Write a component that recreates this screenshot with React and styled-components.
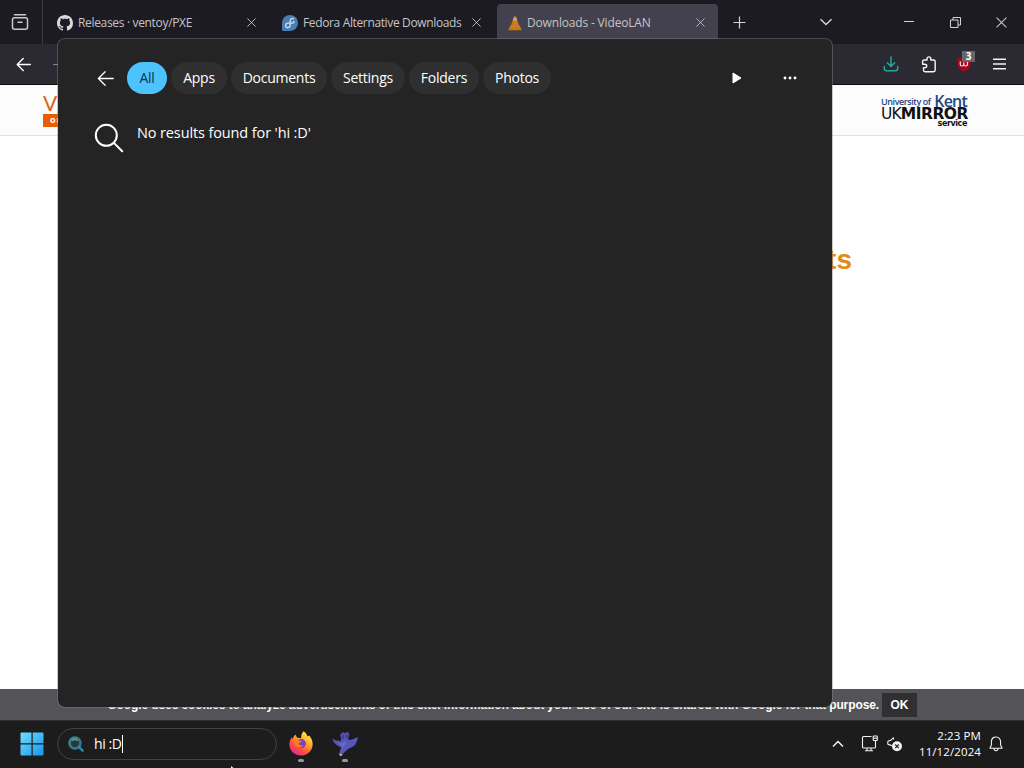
import styled, { createGlobalStyle } from 'styled-components';

const filters = [
  { label: 'All', width: 40, active: true },
  { label: 'Apps', width: 56 },
  { label: 'Documents', width: 96 },
  { label: 'Settings', width: 74 },
  { label: 'Folders', width: 70 },
  { label: 'Photos', width: 68 },
];

const CloseIcon = ({ size = 9 }) => (
  <svg width={size} height={size} viewBox="0 0 10 10" stroke="currentColor" fill="none">
    <path d="M.5.5l9 9M9.5.5l-9 9" />
  </svg>
);

const ArchiveIcon = () => (
  <svg width="18" height="18" viewBox="0 0 18 18" fill="none" stroke="#c9c9d1" strokeWidth="1.5">
    <path d="M3.5 1.8h11" strokeLinecap="round" />
    <rect x="1.5" y="4.8" width="15" height="11.5" rx="2" />
    <path d="M7 9.2h4" strokeLinecap="round" />
  </svg>
);

const GithubIcon = () => (
  <svg width="16" height="16" viewBox="0 0 16 16" fill="#d8d8dc">
    <path d="M8 0C3.58 0 0 3.58 0 8c0 3.54 2.29 6.53 5.47 7.59.4.07.55-.17.55-.38 0-.19-.01-.82-.01-1.49-2.01.37-2.53-.49-2.69-.94-.09-.23-.48-.94-.82-1.13-.28-.15-.68-.52-.01-.53.63-.01 1.08.58 1.23.82.72 1.21 1.87.87 2.33.66.07-.52.28-.87.51-1.07-1.78-.2-3.64-.89-3.64-3.95 0-.87.31-1.59.82-2.15-.08-.2-.36-1.02.08-2.12 0 0 .67-.21 2.2.82.64-.18 1.32-.27 2-.27s1.36.09 2 .27c1.53-1.04 2.2-.82 2.2-.82.44 1.1.16 1.92.08 2.12.51.56.82 1.27.82 2.15 0 3.07-1.87 3.75-3.65 3.95.29.25.54.73.54 1.48 0 1.07-.01 1.93-.01 2.2 0 .21.15.46.55.38A8 8 0 0 0 16 8c0-4.42-3.58-8-8-8z" />
  </svg>
);

const FedoraIcon = () => (
  <svg width="16" height="16" viewBox="0 0 16 16">
    <path d="M8 0a8 8 0 0 1 0 16H1.5A1.5 1.5 0 0 1 0 14.5V8a8 8 0 0 1 8-8z" fill="#4b7fb2" />
    <path
      d="M12 4.2C10.6 2.7 8.2 3.4 8.2 5.7v4.5c0 1.5-1 2.4-2.2 2.4s-2.300-.9-2.300-2.200 1-2.200 2.300-2.200h3.700c1.300 0 2.300-.8 2.300-2.200"
      fill="none"
      stroke="#cddded"
      strokeWidth="1.3"
    />
  </svg>
);

const ConeIcon = () => (
  <svg width="14" height="16" viewBox="0 0 14 16">
    <path d="M2.2 10.5h9.6l2 4.7H.2z" fill="#c8780f" />
    <path d="M6 1.2h2l3.3 10.6c-2 1.3-6.6 1.3-8.6 0z" fill="#d67a14" />
    <path d="M5.5 3h3l.7 2.4H4.8z" fill="#b9aaa3" />
    <path d="M3.9 8h6.200l.5 1.600H3.400z" fill="#99826f" />
  </svg>
);

const ArrowIcon = ({ size, weight = 1.5 }) => (
  <svg width={size} height={size} viewBox="0 0 16 16" fill="none" stroke="#fff" strokeWidth={weight}>
    <path d="M1.3 8h14M7.7 1.6L1.3 8l6.4 6.4" strokeLinecap="round" strokeLinejoin="round" />
  </svg>
);

const DownloadIcon = () => (
  <svg width="16" height="16" viewBox="0 0 16 16" fill="none" stroke="#25a59e" strokeWidth="1.5">
    <path d="M8 .8v9.400M4.300 6.700L8 10.400l3.700-3.700M1.300 10.500v2c0 1.500.7 2.200 2.200 2.200h9c1.500 0 2.200-.7 2.200-2.200v-2" strokeLinecap="round" />
  </svg>
);

const PuzzleIcon = () => (
  <svg width="16" height="17" viewBox="0 0 16 17" fill="none" stroke="#f5f5f8" strokeWidth="1.4">
    <path
      d="M6 4V3c0-1.300.8-2.100 1.900-2.100S9.800 1.700 9.800 3v1h2.700c1.200 0 1.700.6 1.700 1.700v8.400c0 1.100-.6 1.700-1.700 1.700H4.200c-1.200 0-1.700-.6-1.700-1.700v-2.500h1.200c1.300 0 2-.7 2-1.700s-.7-1.700-2-1.700H1.600V5.700C1.600 4.600 2.200 4 3.300 4z"
      strokeLinejoin="round"
    />
  </svg>
);

const ShieldIcon = () => (
  <svg width="14" height="16" viewBox="0 0 14 16">
    <path d="M7 0c2 1.500 4.300 2 6.700 2v6c0 4-3.200 6.300-6.700 8C3.500 14.300.3 12 .3 8V2C2.700 2 5 1.500 7 0z" fill="#a5061d" />
    <path d="M3.300 5.500v3c0 2 3.500 2 3.500 0v-2 2c0 2 3.700 2 3.700 0v-3" fill="none" stroke="#eee" strokeWidth="1.2" />
  </svg>
);

const SearchIcon = () => (
  <svg width="30" height="30" viewBox="0 0 30 30" fill="none" stroke="#fff" strokeWidth="2">
    <circle cx="12.3" cy="12.3" r="10.5" />
    <path d="M19.9 19.9l8.3 8.3" strokeLinecap="round" />
  </svg>
);

const WindowsIcon = () => (
  <svg width="24" height="24" viewBox="0 0 24 24">
    <defs>
      <linearGradient id="win" x1="0" y1="0" x2="1" y2="1">
        <stop offset="0" stopColor="#72dcfa" />
        <stop offset="1" stopColor="#1597ef" />
      </linearGradient>
    </defs>
    <path d="M1.500.5h10v10.700H.5V1.500a1 1 0 0 1 1-1zM12.700.5h9.800a1 1 0 0 1 1 1v9.700H12.700zM.5 12.500h11v11h-10a1 1 0 0 1-1-1zM12.700 12.500h10.800v10a1 1 0 0 1-1 1h-9.800z" fill="url(#win)" />
  </svg>
);

const TaskSearchIcon = () => (
  <svg width="16" height="16" viewBox="0 0 16 16" fill="none">
    <defs>
      <linearGradient id="lens" x1="0" y1="0" x2="1" y2="1">
        <stop offset="0" stopColor="#2499b5" />
        <stop offset=".45" stopColor="#40777b" />
        <stop offset="1" stopColor="#2378b8" />
      </linearGradient>
    </defs>
    <circle cx="7" cy="7" r="5.5" fill="#263940" stroke="url(#lens)" strokeWidth="2.5" />
    <path d="M4 4.500a5 5 0 0 1 6 0" stroke="#7b927a" strokeWidth="1.5" />
    <path d="M11 11l3.600 3.600" stroke="#238fc0" strokeWidth="2.3" strokeLinecap="round" />
  </svg>
);

const FirefoxIcon = () => (
  <svg width="24" height="25" viewBox="0 0 24 25">
    <defs>
      <linearGradient id="fox" x1=".85" y1=".05" x2=".25" y2="1">
        <stop offset="0" stopColor="#fff34a" />
        <stop offset=".35" stopColor="#ffad2d" />
        <stop offset=".65" stopColor="#ff5939" />
        <stop offset="1" stopColor="#e3208f" />
      </linearGradient>
    </defs>
    <path d="M14.500.3c2 1.200 3.500 3 3.800 5 1-.1 1.600-.4 2-.7 2.300 3 3.600 6 3.300 9.300C23.200 20 18.200 24.500 12 24.500S.4 20 .4 13.500C.4 10.500 1.500 8 3 6.300l.5 2C4.500 6 5.300 4.600 6.600 3.600c.1 1.300.8 2.400 2 3.200l3.500.4C12 4.500 12.800 2 14.500.3z" fill="url(#fox)" />
    <circle cx="12.4" cy="12.6" r="4.5" fill="#7944b8" />
    <path d="M4.500 9.300c2-1.800 4.700-1.400 6 .4l2.500.4c-.5 1.300-2.400 1.200-3.400 2.300.4 1.700 2.600 2.500 4.500 1.700-.7 2.900-5.500 3.400-7.400.5-.9-1.500-1.700-3.500-2.200-5.300z" fill="#ff7c2b" />
  </svg>
);

const BirdIcon = () => (
  <svg width="26" height="26" viewBox="0 0 26 26">
    <path d="M.5 7.600c2.600 2 5.200 2.200 8.200 2.600l.6-2.700c-.9-1.500-1.300-3-.7-4.500L11.200 1.300l1.800.9 2-1.200c2 .3 2.700 2.200 1.900 4.100l-.8 1.600.7 2.200c3.600 0 6.100-1.500 9-3-.5 5.900-3.500 10.200-8.200 11.100l-4.200 3.200-4 4.200-2.700-1 2.700-6.800C5 14.800 1.300 12.300.5 7.600z" fill="#5856b9" />
    <path d="M10.800 2.500l1.700 3.300L11 9l-1.500-3zM15.500 2l.4 4-2 2.300-.4-4z" fill="#413d9d" />
    <path d="M4.500 11.300c3.500 1.700 6.500.7 10-1.600-1 4-3 7-6 9l2-3.500z" fill="#6a68c7" />
    <path d="M7.900 22.500l2.800 1-1.600 1.700-1.800-1z" fill="#a4b6a7" />
  </svg>
);

const MonitorIcon = () => (
  <svg width="17" height="17" viewBox="0 0 17 17" fill="none" stroke="#f2f2f2" strokeWidth="1.1">
    <path d="M10.500 1.500h-8c-.7 0-1 .3-1 1v9.500c0 .7.3 1 1 1h11c.7 0 1-.3 1-1V6M4 15.800h8M6 13v2.800M10 13v2.800" />
    <rect x="12.2" y="1" width="4.1" height="4.5" rx=".5" />
    <path d="M12.200 3.200h4" />
  </svg>
);

const VolumeIcon = () => (
  <svg width="16" height="16" viewBox="0 0 16 16">
    <path d="M6.500 1.500v2M6.500 1.600L3.800 4.300 1.500 5C.8 5.300.8 5.500.8 6v1.700c0 .6.2.8.8.9l2.200.5 1 1" fill="none" stroke="#f2f2f2" strokeWidth="1.1" />
    <circle cx="10" cy="10.300" r="5" fill="#f2f2f2" />
    <path d="M8.200 8.500l3.600 3.600M11.800 8.500l-3.600 3.600" stroke="#1c1c1c" strokeWidth="1.1" />
  </svg>
);

const BellIcon = () => (
  <svg width="14" height="16" viewBox="0 0 14 16" fill="none" stroke="#f2f2f2" strokeWidth="1.1">
    <path d="M7 1C4.300 1 2.400 3 2.400 5.700v3.200L.9 12.200h12.200l-1.500-3.300V5.700C11.600 3 9.700 1 7 1zM5 12.500c.2 2.900 3.800 2.900 4 0" strokeLinejoin="round" />
  </svg>
);

const App = () => (
  <Desktop>
    <GlobalStyle />
    <TabStrip>
      <RecentButton>
        <ArchiveIcon />
      </RecentButton>
      <Tab $width={225}>
        <GithubIcon />
        <TabTitle $tracking={-0.33}>Releases · ventoy/PXE</TabTitle>
        <CloseIcon />
      </Tab>
      <Tab $width={225}>
        <FedoraIcon />
        <TabTitle $tracking={-0.36}>Fedora Alternative Downloads</TabTitle>
        <CloseIcon />
      </Tab>
      <Tab $width={221} $active>
        <ConeIcon />
        <TabTitle $tracking={-0.17}>Downloads - VideoLAN</TabTitle>
        <CloseIcon />
      </Tab>
      <NewTab>
        <svg width="13" height="13" viewBox="0 0 13 13" stroke="#d3d3d7" strokeWidth="1.2">
          <path d="M6.500.5v12M.5 6.500h12" />
        </svg>
      </NewTab>
      <WindowControls>
        <svg width="14" height="8" viewBox="0 0 14 8" fill="none" stroke="#d3d3d7" strokeWidth="1.5">
          <path d="M1.500 1.200L7 6.500l5.500-5.300" />
        </svg>
        <svg width="10" height="10" viewBox="0 0 10 10" stroke="#d3d3d7">
          <path d="M0 4.500h10" />
        </svg>
        <svg width="11" height="11" viewBox="0 0 11 11" stroke="#d3d3d7" fill="none">
          <path d="M.5 3h7.500v7.500H.5zM3 3V.5h7.500V8H8" />
        </svg>
        <CloseIcon size={11} />
      </WindowControls>
    </TabStrip>
    <Toolbar>
      <ArrowIcon size={15} />
      <ForwardIcon />
      <ToolbarActions>
        <DownloadIcon />
        <PuzzleIcon />
        <Extension>
          <ShieldIcon />
          <Badge>3</Badge>
        </Extension>
        <svg width="13" height="12" viewBox="0 0 13 12" stroke="#f2f2f5" strokeWidth="1.4">
          <path d="M0 1.200h13M0 6h13M0 10.800h13" />
        </svg>
      </ToolbarActions>
    </Toolbar>
    <PageHeader>
      <SiteLogo>
        <span>VideoLAN</span>
        <strong>organization</strong>
      </SiteLogo>
      <Sponsor>
        <SponsorLine>
          <span>University of</span>
          <b>Kent</b>
        </SponsorLine>
        <SponsorName>
          UK<b>MIRROR</b>
        </SponsorName>
        <SponsorService>service</SponsorService>
      </Sponsor>
    </PageHeader>
    <PageBody>
      <Heading>VLC downloads and mirror hosts</Heading>
    </PageBody>
    <CookieBar>
      <CookieText>
        Google uses cookies to analyze advertisements of this site. Information about your use of our site is shared with Google for that purpose.
      </CookieText>
      <OkButton>OK</OkButton>
    </CookieBar>
    <Taskbar>
      <WindowsIcon />
      <SearchBox>
        <TaskSearchIcon />
        <span>hi :D</span>
        <Caret />
      </SearchBox>
      <TaskApp>
        <FirefoxIcon />
      </TaskApp>
      <TaskApp>
        <BirdIcon />
      </TaskApp>
      <Tray>
        <svg width="12" height="8" viewBox="0 0 12 8" fill="none" stroke="#f2f2f2" strokeWidth="1.5">
          <path d="M1 6.500L6 1.500l5 5" />
        </svg>
        <MonitorIcon />
        <VolumeIcon />
        <Clock>
          <span>2:23 PM</span>
          <span>11/12/2024</span>
        </Clock>
        <BellIcon />
      </Tray>
    </Taskbar>
    <SearchPanel>
      <FilterRow>
        <ArrowIcon size={17} weight={1.2} />
        <Filters>
          {filters.map(({ label, width, active }) => (
            <Filter key={label} $width={width} $active={active}>
              {label}
            </Filter>
          ))}
        </Filters>
        <PanelActions>
          <svg width="10" height="12" viewBox="0 0 10 12" fill="#fff" stroke="#fff" strokeLinejoin="round">
            <path d="M1 1l8 5-8 5z" />
          </svg>
          <svg width="14" height="4" viewBox="0 0 14 4" fill="#fff">
            <circle cx="2" cy="2" r="1.45" />
            <circle cx="7" cy="2" r="1.45" />
            <circle cx="12" cy="2" r="1.45" />
          </svg>
        </PanelActions>
      </FilterRow>
      <EmptyResult>
        <SearchIcon />
        <p>No results found for 'hi :D'</p>
      </EmptyResult>
    </SearchPanel>
    <PointerHint viewBox="0 0 3 2">
      <path d="M0 0l2.500 2H0z" fill="#eee" />
    </PointerHint>
  </Desktop>
);

export default App;

const GlobalStyle = createGlobalStyle`
  * {
    box-sizing: border-box;
  }

  body {
    margin: 0;
    overflow: hidden;
    background: #1c1c1c;
  }

  svg {
    display: block;
    flex-shrink: 0;
  }
`;

const Desktop = styled.div`
  position: relative;
  display: flex;
  flex-direction: column;
  width: 1024px;
  height: 768px;
  overflow: hidden;
  font-family: 'Open Sans', 'Noto Sans', sans-serif;
  color: #fff;
`;

const TabStrip = styled.div`
  display: flex;
  height: 44px;
  background: #1c1b22;
  color: #c4c4c9;
`;

const RecentButton = styled.div`
  display: flex;
  align-items: center;
  width: 43px;
  padding-left: 11px;
  border-right: 1px solid #3c3b43;
`;

const Tab = styled.div`
  display: flex;
  align-items: center;
  width: ${({ $width }) => $width}px;
  height: 37px;
  margin-top: 4px;
  margin-left: ${({ $active }) => ($active ? '4px' : '0')};
  padding: 0 ${({ $active }) => ($active ? '13px 0 11px' : '12px 0 14px')};
  border-radius: 4px;
  background: ${({ $active }) => ($active ? '#42414d' : 'transparent')};
`;

const TabTitle = styled.span`
  flex: 1;
  margin-left: 5px;
  font-size: 12px;
  letter-spacing: ${({ $tracking = 0 }) => $tracking}px;
  white-space: nowrap;
`;

const NewTab = styled.div`
  padding: 16px 0 0 15px;
`;

const WindowControls = styled.div`
  display: grid;
  grid-template-columns: 84px 46px 46px 46px;
  align-items: center;
  justify-items: center;
  margin-left: auto;

  svg:first-child {
    margin-right: 36px;
  }
`;

const Toolbar = styled.div`
  display: flex;
  align-items: center;
  height: 41px;
  padding: 0 18px 0 16px;
  border-bottom: 1px solid #0c0c0d;
  background: #2b2a33;
`;

const ForwardIcon = styled.span`
  width: 12px;
  height: 1px;
  margin-left: 22px;
  background: #85848b;
`;

const ToolbarActions = styled.div`
  display: flex;
  align-items: center;
  gap: 22px;
  margin-left: auto;
`;

const Extension = styled.div`
  position: relative;
  margin-left: -2px;
`;

const Badge = styled.span`
  position: absolute;
  top: -5px;
  left: 5px;
  width: 13px;
  height: 11px;
  background: #66666b;
  font: bold 10px/11px 'Open Sans', sans-serif;
  text-align: center;
`;

const PageHeader = styled.header`
  display: flex;
  align-items: flex-start;
  justify-content: space-between;
  height: 51px;
  padding: 7px 57px 0 43px;
  border-bottom: 1px solid #e2e2e2;
  background: #fcfcfc;
`;

const SiteLogo = styled.div`
  display: flex;
  flex-direction: column;
  width: 100px;

  span {
    height: 22px;
    color: #dc631b;
    font: 400 21px/21px Lato, sans-serif;
  }

  strong {
    height: 13px;
    padding-left: 7px;
    background: #e85e00;
    font: bold 9px/12px 'Open Sans', sans-serif;
    letter-spacing: 1px;
  }
`;

const Sponsor = styled.div`
  display: flex;
  flex-direction: column;
  width: 86px;
  padding-top: 4px;
  color: #111;
  white-space: nowrap;
`;

const SponsorLine = styled.div`
  display: flex;
  justify-content: space-between;
  align-items: flex-end;
  height: 12px;
  color: #27457f;
  font: 600 9px/12px 'Open Sans', sans-serif;
  letter-spacing: -0.42px;

  b {
    font-size: 16px;
    font-weight: 600;
    line-height: 13px;
    letter-spacing: -0.8px;
  }
`;

const SponsorName = styled.span`
  height: 12px;
  font: 15.5px/13px 'DejaVu Sans', sans-serif;
  letter-spacing: -0.85px;

  b {
    letter-spacing: -0.5px;
  }
`;

const SponsorService = styled.span`
  font: bold 8px/8px 'DejaVu Sans', sans-serif;
  letter-spacing: -0.4px;
  text-align: right;
`;

const PageBody = styled.main`
  flex: 1;
  padding-top: 107px;
  background: #fff;
`;

const Heading = styled.h1`
  width: 852px;
  margin: 0;
  color: #e58a13;
  font: bold 28px/34px 'Liberation Sans', sans-serif;
  text-align: right;
`;

const CookieBar = styled.div`
  display: flex;
  align-items: center;
  height: 31px;
  padding-right: 107px;
  background: #545458;
  font: bold 12px/14px 'Liberation Sans', Arial, sans-serif;
`;

const CookieText = styled.span`
  width: 879px;
  margin-right: 3px;
  flex-shrink: 0;
  text-align: right;
  white-space: nowrap;
  letter-spacing: -0.105px;
`;

const OkButton = styled.div`
  flex: none;
  width: 35px;
  padding: 5px 0;
  background: #303030;
  text-align: center;
`;

const Taskbar = styled.footer`
  display: flex;
  align-items: center;
  height: 48px;
  padding: 0 21px 2px 20px;
  border-top: 1px solid #303030;
  background: #1c1c1c;
`;

const SearchBox = styled.div`
  display: flex;
  align-items: center;
  width: 220px;
  height: 32px;
  margin-left: 13px;
  padding-left: 10px;
  border: 1px solid #424242;
  border-radius: 16px;
  background: #1d1d1d;
  font-size: 14px;

  span {
    margin-left: 10px;
    letter-spacing: -0.4px;
    white-space: nowrap;
  }
`;

const Caret = styled.i`
  width: 1px;
  height: 18px;
  background: #fff;
`;

const TaskApp = styled.div`
  display: flex;
  flex-direction: column;
  align-items: center;
  width: 44px;
  height: 37px;
  padding-top: 6px;
  transform: translateX(2px);

  &::after {
    content: '';
    width: 6px;
    height: 3px;
    margin-top: auto;
    flex: none;
    border-radius: 2px;
    background: #969a9d;
  }
`;

const Tray = styled.div`
  display: flex;
  align-items: center;
  margin-left: auto;

  svg:nth-child(2) {
    margin-left: 17px;
  }

  svg:nth-child(3) {
    margin-left: 9px;
  }
`;

const Clock = styled.div`
  display: flex;
  flex-direction: column;
  align-items: flex-end;
  width: 78px;
  margin-right: 8px;
  font-size: 11.5px;
  line-height: 16px;
  letter-spacing: 0.1px;
`;

const SearchPanel = styled.section`
  position: absolute;
  top: 38px;
  left: 57px;
  width: 776px;
  height: 670px;
  padding: 23px 35px 0 39px;
  border: 1px solid rgba(130, 130, 130, 0.45);
  border-radius: 8px;
  background: #242424;
  background-clip: padding-box;
`;

const FilterRow = styled.div`
  display: flex;
  align-items: center;
  height: 32px;
`;

const Filters = styled.div`
  display: flex;
  gap: 4px;
  margin-left: 13px;
`;

const Filter = styled.div`
  width: ${({ $width }) => $width}px;
  height: 32px;
  border-radius: 16px;
  background: ${({ $active }) => ($active ? '#4cc2ff' : '#2f2f2f')};
  color: ${({ $active }) => ($active ? '#123449' : '#fff')};
  font-size: 14px;
  line-height: 32px;
  letter-spacing: -0.25px;
  text-align: center;
`;

const PanelActions = styled.div`
  display: flex;
  align-items: center;
  gap: 41px;
  margin-left: auto;
`;

const EmptyResult = styled.div`
  display: flex;
  align-items: flex-start;
  margin: 29px 0 0 -3px;

  p {
    margin: 0 0 0 13px;
    font-size: 14.5px;
    line-height: 20px;
    letter-spacing: -0.12px;
  }
`;

const PointerHint = styled.svg`
  position: absolute;
  bottom: 0;
  left: 231px;
  width: 3px;
  height: 2px;
`;
